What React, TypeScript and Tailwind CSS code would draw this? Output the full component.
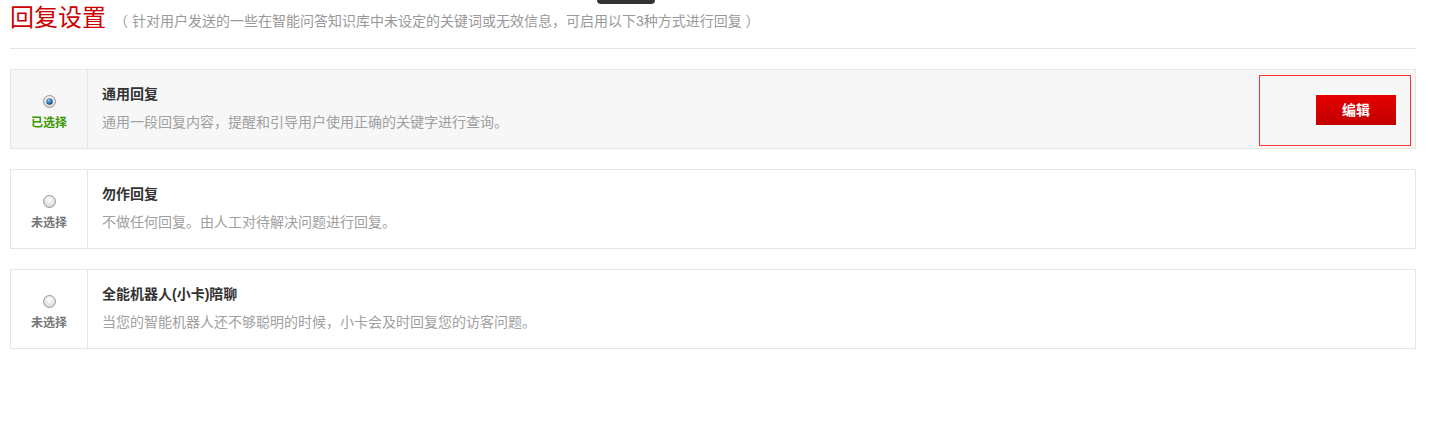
import React from "react";

function Radio({ checked }: { checked: boolean }) {
  return (
    <svg width="13" height="13" viewBox="0 0 13 13" className="block">
      <defs>
        <radialGradient id={checked ? "rgc" : "rgu"} cx="50%" cy="35%" r="65%">
          <stop offset="0%" stopColor="#ffffff" />
          <stop offset="100%" stopColor="#d4d4d4" />
        </radialGradient>
        <radialGradient id="dot" cx="40%" cy="35%" r="70%">
          <stop offset="0%" stopColor="#8fd0f5" />
          <stop offset="60%" stopColor="#2b6fae" />
          <stop offset="100%" stopColor="#123d6b" />
        </radialGradient>
      </defs>
      <circle cx="6.5" cy="6.5" r="6" fill={`url(#${checked ? "rgc" : "rgu"})`} stroke="#9a9a9a" strokeWidth="1" />
      {checked && <circle cx="6.5" cy="6.5" r="3.2" fill="url(#dot)" />}
    </svg>
  );
}

type CardProps = {
  selected: boolean;
  title: string;
  desc: string;
  edit?: boolean;
};

function Card({ selected, title, desc, edit }: CardProps) {
  return (
    <div
      className={`flex h-[80px] border border-[#e6e6e6] ${selected ? "bg-[#f7f7f7]" : "bg-white"}`}
    >
      <div className="flex w-[77px] shrink-0 flex-col items-center border-r border-[#e6e6e6] pt-[25px]">
        <Radio checked={selected} />
        <span
          className={`mt-[6px] text-[12px] leading-[18px] font-bold ${selected ? "text-[#3b9a00]" : "text-[#777]"}`}
        >
          {selected ? "已选择" : "未选择"}
        </span>
      </div>
      <div className="flex-1 pl-[14px] pt-[14px]">
        <div className="text-[14px] leading-[20px] font-bold text-[#333]">{title}</div>
        <div className="mt-[8px] text-[14px] leading-[20px] text-[#a0a0a0]">{desc}</div>
      </div>
      {edit && (
        <div className="mt-[5px] mr-[4px] mb-[2px] flex w-[152px] shrink-0 items-start justify-end border border-[#f33] pt-[19px] pr-[14px]">
          <button className="h-[30px] w-[80px] bg-gradient-to-b from-[#e60000] to-[#c20000] text-[14px] font-bold text-white">
            编辑
          </button>
        </div>
      )}
    </div>
  );
}

export default function App() {
  return (
    <div className="relative min-h-[428px] bg-white pl-[10px] pr-[13px] font-['Liberation_Sans','Noto_Sans_CJK_SC',sans-serif]">
      <div className="absolute left-[597px] top-0 h-[4px] w-[58px] rounded-b-[5px] bg-[#333]" />
      <div className="flex h-[49px] items-baseline border-b border-[#e5e5e5]">
        <h1 className="text-[24px] leading-[36px] text-[#cc0000]">回复设置</h1>
        <span className="ml-[8px] text-[14px] leading-[20px] text-[#999]">
          （ 针对用户发送的一些在智能问答知识库中未设定的关键词或无效信息，可启用以下3种方式进行回复 ）
        </span>
      </div>
      <div className="mt-[20px] flex flex-col gap-[20px]">
        <Card
          selected
          edit
          title="通用回复"
          desc="通用一段回复内容，提醒和引导用户使用正确的关键字进行查询。"
        />
        <Card selected={false} title="勿作回复" desc="不做任何回复。由人工对待解决问题进行回复。" />
        <Card
          selected={false}
          title="全能机器人(小卡)陪聊"
          desc="当您的智能机器人还不够聪明的时候，小卡会及时回复您的访客问题。"
        />
      </div>
    </div>
  );
}
